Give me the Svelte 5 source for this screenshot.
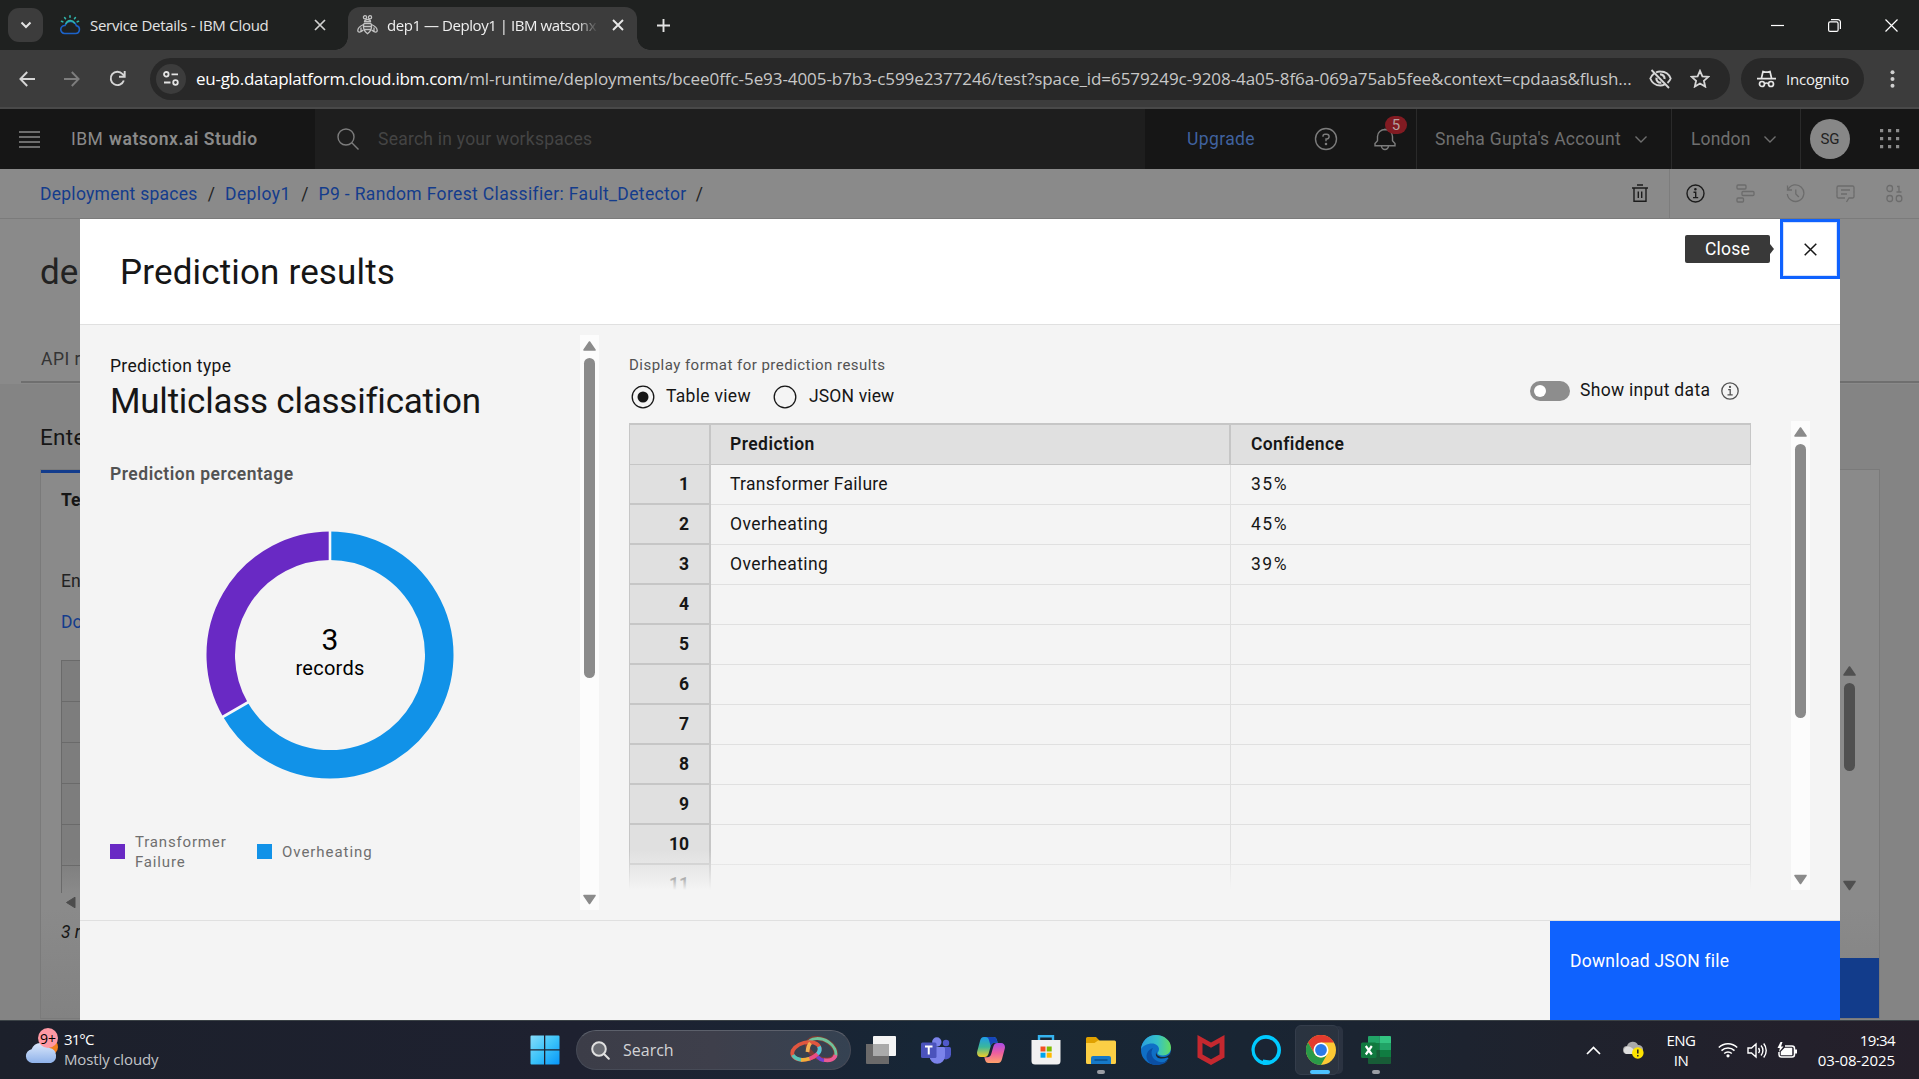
<script>
  const results = [
    ['Transformer Failure', '35%'],
    ['Overheating', '45%'],
    ['Overheating', '39%'],
  ];
  const rows = Array.from({ length: 11 }, (_, i) => ({
    n: i + 1,
    prediction: results[i]?.[0] ?? '',
    confidence: results[i]?.[1] ?? '',
  }));

  // Donut geometry: one ring, split clockwise from the top
  const C = 124;
  const R = 109.25;
  const point = (deg, r) => {
    const a = ((deg - 90) * Math.PI) / 180;
    return [C + r * Math.cos(a), C + r * Math.sin(a)];
  };
  function arc(from, to) {
    const [x1, y1] = point(from, R);
    const [x2, y2] = point(to, R);
    return `M${x1} ${y1}A${R} ${R} 0 ${to - from > 180 ? 1 : 0} 1 ${x2} ${y2}`;
  }
  const cut = (deg) => {
    const [x1, y1] = point(deg, 94);
    const [x2, y2] = point(deg, 125);
    return `M${x1} ${y1}L${x2} ${y2}`;
  };
</script>

{#snippet scrollbar(h, top, len, track, color)}
  <svg class="scrollbar" width="19" height={h} viewBox="0 0 19 {h}">
    <rect width="19" height={h} fill={track} />
    <path d="M9.5 7 L15 15 H4 Z" fill={color} stroke={color} stroke-width="1.6" stroke-linejoin="round" />
    <rect x="4" y={top} width="11" height={len} rx="5.5" fill={color} />
    <path d="M9.5 {h - 6.5} L15 {h - 14.5} H4 Z" fill={color} stroke={color} stroke-width="1.6" stroke-linejoin="round" />
  </svg>
{/snippet}

<div class="screen">
  <div class="tabs">
    <div class="tab-menu">
      <svg width="12" height="8" viewBox="0 0 12 8" fill="none" stroke="#e3e3e3" stroke-width="2"><path d="M1.5 1.5 6 6l4.500-4.500" /></svg>
    </div>
    <div class="tab idle">
      <svg width="22" height="20" viewBox="0 0 22 20" fill="none" stroke-width="1.6" stroke-linecap="round">
        <path d="M5.500 18.500h11a4 4 0 0 0 .8-7.900A6 6 0 0 0 6 10.500a4 4 0 0 0-.5 8Z" stroke="#1c63c9" />
        <path d="M7 8.500a4.800 4.800 0 0 1 8.500-.5" stroke="#2fb3a9" />
        <path d="M11 .9v1.300M5.600 2.600l.9 1.100M16.400 2.600l-.9 1.100M2.500 6.300l1.300.5M19.500 6.300l-1.300.5" stroke="#2fb3a9" />
      </svg>
      <span class="tab-label first">Service Details - IBM Cloud</span>
      <svg class="tab-x" width="12" height="12" viewBox="0 0 12 12" stroke="#d0d0d0" stroke-width="1.7"><path d="M1 1l10 10M11 1 1 11" /></svg>
    </div>
    <div class="tab active">
      <svg width="21" height="20" viewBox="0 0 21 20" fill="none" stroke="#c4c4c4" stroke-width="1.300">
        <circle cx="8" cy="2.300" r="1.600" /><circle cx="13" cy="2.300" r="1.600" />
        <path d="M7.500 6.500a3 2.200 0 0 1 6 0ZM7 8.500h7M6.700 11.500h7.600M7 14.500h7M6.800 8.500c-.7 3-.3 7.500 3.700 10.300C14.500 16 14.900 11.500 14.200 8.500" />
        <path d="M6.500 9.500C3 11 .8 13.300.8 15.500c0 2.300 3 2 5.500-.5M14.500 9.500c3.500 1.500 5.700 3.800 5.700 6 0 2.300-3 2-5.500-.5M4 12.500v4M17 12.500v4" />
      </svg>
      <span class="tab-label second">dep1 — Deploy1 | IBM watsonx</span>
      <svg class="tab-x" width="12" height="12" viewBox="0 0 12 12" stroke="#e8e8e8" stroke-width="1.9"><path d="M1 1l10 10M11 1 1 11" /></svg>
    </div>
    <svg class="plus" width="13" height="13" viewBox="0 0 13 13" stroke="#e3e3e3" stroke-width="1.900"><path d="M6.500 0v13M0 6.500h13" /></svg>
    <div class="window-controls">
      <svg width="13" height="13" viewBox="0 0 13 13" stroke="#fff" stroke-width="1.200"><path d="M0 6.500h13" /></svg>
      <svg width="13" height="13" viewBox="0 0 13 13" fill="none" stroke="#fff" stroke-width="1.200"><rect x=".6" y="2.900" width="9.500" height="9.500" rx="1.500" /><path d="M3 .7h7a2.400 2.400 0 0 1 2.400 2.400V10" /></svg>
      <svg width="13" height="13" viewBox="0 0 13 13" stroke="#fff" stroke-width="1.200"><path d="M.5.5l12 12M12.500.5l-12 12" /></svg>
    </div>
  </div>

  <div class="toolbar">
    <svg width="16" height="16" viewBox="0 0 16 16" fill="none" stroke="#d6d6d6" stroke-width="1.900"><path d="M16 8H1.800M8.200 1 1.400 8l6.800 7" /></svg>
    <svg width="16" height="16" viewBox="0 0 16 16" fill="none" stroke="#7d7d7d" stroke-width="1.900"><path d="M0 8h14.200M7.800 1l6.800 7-6.800 7" /></svg>
    <svg width="17" height="17" viewBox="0 0 17 17" fill="none" stroke="#d6d6d6" stroke-width="1.900"><path d="M14.800 10.500A6.700 6.700 0 1 1 13.500 4L15.500 6" /><path d="M15.700 1v5.700H10" /></svg>
    <div class="address">
      <div class="site">
        <svg width="16" height="15" viewBox="0 0 16 15" fill="none" stroke="#e3e3e3" stroke-width="1.800"><circle cx="3.300" cy="3.300" r="2.300" /><path d="M8.500 3.300H15M1 11.500h6.500" /><circle cx="12.500" cy="11.500" r="2.300" /></svg>
      </div>
      <span class="host">eu-gb.dataplatform.cloud.ibm.com</span><span class="path">/ml-runtime/deployments/bcee0ffc-5e93-4005-b7b3-c599e2377246/test?space_id=6579249c-9208-4a05-8f6a-069a75ab5fee&amp;context=cpdaas&amp;flush...</span>
      <svg class="eye" width="23" height="20" viewBox="0 0 23 20" fill="none" stroke="#d6d6d6" stroke-width="1.900"><path d="M7 3.300A11 11 0 0 1 11.500 2.500c4.700 0 8.600 2.800 10.200 7a10.500 10.500 0 0 1-3.200 4.500M4.800 4.800A11 11 0 0 0 1.300 9.500c1.600 4.200 5.500 7 10.200 7a11 11 0 0 0 4-.8M2.500 1l17.500 18" /><path d="M11 5.500a4 4 0 0 1 4.500 4.500M7.500 8.800a4 4 0 0 0 4.800 4.800" stroke-width="2.200" /></svg>
      <svg class="star" width="20" height="19" viewBox="0 0 20 19" fill="none" stroke="#d6d6d6" stroke-width="1.800"><path d="M10 1.800l2.400 5.500 6 .5-4.500 4 1.300 5.800L10 14.500l-5.200 3.100 1.300-5.800-4.500-4 6-.5Z" /></svg>
    </div>
    <div class="incognito">
      <svg width="19" height="18" viewBox="0 0 19 18" fill="none" stroke="#e6e6e6" stroke-width="1.700"><path d="M0 8.700h19M4.500 8 6 1.500l2 .6h3l2-.6L14.500 8" /><circle cx="5" cy="14" r="2.500" /><circle cx="14" cy="14" r="2.500" /><path d="M7.500 13.500q2-1 4 0" /></svg>
      <span>Incognito</span>
    </div>
    <svg class="kebab" width="5" height="18" viewBox="0 0 5 18" fill="#d0d0d0"><circle cx="2.500" cy="2.300" r="2" /><circle cx="2.500" cy="9" r="2" /><circle cx="2.500" cy="15.700" r="2" /></svg>
  </div>

  <header class="app-bar">
    <div class="brand">
      <svg width="21" height="17" viewBox="0 0 21 17" stroke="#8a8a8a" stroke-width="1.300"><path d="M0 1h21M0 6h21M0 11h21M0 16h21" /></svg>
      <span class="ibm">IBM</span><b>watsonx.ai Studio</b>
    </div>
    <div class="search">
      <svg width="22" height="22" viewBox="0 0 22 22" fill="none" stroke="#7c7c7c" stroke-width="1.400"><circle cx="9" cy="9" r="8" /><path d="M14.800 14.800 21.500 21.500" /></svg>
      <span>Search in your workspaces</span>
    </div>
    <div class="actions">
      <span class="upgrade">Upgrade</span>
      <svg class="help" width="24" height="24" viewBox="0 0 24 24" fill="none" stroke="#7c7c7c" stroke-width="1.400"><circle cx="12" cy="12" r="10.500" /><path d="M9 9.800V9.200A2 2 0 0 1 11 7.200h1.700a2.400 2.400 0 0 1 0 4.800H12v2.300" /><circle cx="12" cy="17" r=".6" fill="#7c7c7c" /></svg>
      <div class="bell">
        <svg width="22" height="24" viewBox="0 0 22 24" fill="none" stroke="#7c7c7c" stroke-width="1.400"><path d="M11 3.500v-2M1 18.700v-2.200l2.500-2.800V9.500a7.500 7 0 0 1 15 0v4.200L21 16.500v2.200ZM7.500 19a3.500 3.500 0 0 0 7 0" /></svg>
        <span class="badge">5</span>
      </div>
    </div>
    <div class="menu account"><span>Sneha Gupta's Account</span><svg width="12" height="7" viewBox="0 0 12 7" fill="none" stroke="#6f6f6f" stroke-width="1.400"><path d="M.5.5 6 6 11.500.5" /></svg></div>
    <div class="menu region"><span>London</span><svg width="12" height="7" viewBox="0 0 12 7" fill="none" stroke="#6f6f6f" stroke-width="1.400"><path d="M.5.5 6 6 11.500.5" /></svg></div>
    <div class="user">
      <div class="avatar">SG</div>
      <svg width="20" height="20" viewBox="0 0 20 20" fill="#8a8a8a"><path d="M0 0h3.200v3.200H0ZM8 0h3.200v3.200H8ZM16 0h3.200v3.200H16ZM0 8h3.200v3.200H0ZM8 8h3.200v3.200H8ZM16 8h3.200v3.200H16ZM0 16h3.200v3.200H0ZM8 16h3.200v3.200H8ZM16 16h3.200v3.200H16Z" /></svg>
    </div>
  </header>

  <nav class="crumbs">
    <a class="c1">Deployment spaces</a><i>/</i><a class="c2">Deploy1</a><i>/</i><a class="c3">P9 - Random Forest Classifier: Fault_Detector</a><i>/</i>
    <svg class="trash" width="16" height="19" viewBox="0 0 16 19" fill="none" stroke="#1c1c1c" stroke-width="1.400"><path d="M5 1h6M0 4h16M2 4v13.200h12V4M6.300 7.500v6.500M9.700 7.500v6.500" /></svg>
    <div class="side-tools">
      <svg width="19" height="19" viewBox="0 0 19 19" fill="none" stroke="#1c1c1c" stroke-width="1.400"><circle cx="9.500" cy="9.500" r="8.500" /><path d="M7.500 8.200h2.200v5.300M7 13.600h5.200" /><circle cx="9.400" cy="5.300" r=".6" fill="#1c1c1c" /></svg>
      <svg width="19" height="19" viewBox="0 0 19 19" fill="none" stroke="#6c6c6c" stroke-width="1.300"><rect x="1" y="1" width="9" height="4" rx="1" /><rect x="6" y="7.500" width="12" height="4" rx="1" /><rect x="1" y="14" width="6.500" height="4" rx="1" /></svg>
      <svg width="19" height="19" viewBox="0 0 19 19" fill="none" stroke="#6c6c6c" stroke-width="1.300"><path d="M1.500 1.500v4.500h4.500M2 5.700A8.300 8.300 0 1 1 1.300 10M9.800 5.500v4.500l3 3" /></svg>
      <svg width="19" height="19" viewBox="0 0 19 19" fill="none" stroke="#6c6c6c" stroke-width="1.300"><path d="M9 14H2.500A1.500 1.500 0 0 1 1 12.500v-9A1.500 1.500 0 0 1 2.500 2h14A1.500 1.500 0 0 1 18 3.500v9a1.500 1.500 0 0 1-1.500 1.500H13l-2.500 4M5 6h9M5 10h6" /></svg>
      <svg width="17" height="19" viewBox="0 0 17 19" fill="none" stroke="#6c6c6c" stroke-width="1.300"><rect x="1" y="1.500" width="5.500" height="6" rx="2.500" /><path d="M11 2.500h2V8M10.500 8h5" /><rect x="1" y="11.500" width="5.500" height="6" rx="2.500" /><rect x="10.300" y="11.500" width="5.500" height="6" rx="2.500" /></svg>
    </div>
  </nav>

  <main class="page">
    <section class="page-head">
      <h1>dep1</h1>
      <div class="page-tabs">API reference</div>
    </section>
    <section class="page-body">
      <h2>Enter input data</h2>
      <div class="card">
        <div class="card-line"></div>
        <b>Text</b>
        <p class="enter">Enter data manually</p>
        <p class="download">Download CSV template</p>
        <div class="card-row">
          <div class="grid-ghost"><div></div><div></div><div></div><div></div><div></div><div></div></div>
          {@render scrollbar(236, 23, 88, 'none', '#505050')}
        </div>
        <div class="card-foot">
          <svg width="12" height="13" viewBox="0 0 12 13"><path d="M1.500 6.500 10 1.200v10.600Z" fill="#4c4c4c" stroke="#4c4c4c" stroke-linejoin="round" /></svg>
          <em>3 rows</em>
        </div>
        <div class="predict"></div>
      </div>
    </section>

    <div class="modal" role="dialog" aria-label="Prediction results">
      <div class="modal-head">
        <h2>Prediction results</h2>
        <div class="tooltip">Close</div>
        <button class="close" aria-label="Close">
          <svg width="13" height="13" viewBox="0 0 13 13" stroke="#161616" stroke-width="1.500"><path d="M.7.7l11.600 11.600M12.300.7.7 12.300" /></svg>
        </button>
      </div>

      <div class="modal-body">
        <aside>
          <p class="type">Prediction type</p>
          <h3>Multiclass classification</h3>
          <p class="percent">Prediction percentage</p>
          <svg class="donut" width="248" height="248" viewBox="0 0 248 248" fill="none">
            <path d={arc(0, 240)} stroke="#1192e8" stroke-width="28.500" />
            <path d={arc(240, 360)} stroke="#6929c4" stroke-width="28.500" />
            <path d={cut(0) + cut(240)} stroke="#f7f7fa" stroke-width="2.600" />
            <text class="count" x="124" y="119">3</text>
            <text class="unit" x="124" y="144">records</text>
          </svg>
          <div class="legend">
            <div class="key"><span class="swatch purple"></span><span class="k1">Transformer<br />Failure</span></div>
            <div class="key"><span class="swatch blue"></span><span class="k2">Overheating</span></div>
          </div>
        </aside>
        <div class="left-scroll">{@render scrollbar(575, 23, 320, '#fcfcfc', '#8b8b8b')}</div>

        <div class="results">
          <div class="results-head">
            <div class="format">
              <p>Display format for prediction results</p>
              <div class="radios">
                <svg width="24" height="24" viewBox="0 0 24 24" fill="none"><circle cx="12" cy="12" r="10.800" stroke="#161616" stroke-width="1.300" /><circle cx="12" cy="12" r="5.500" fill="#161616" /></svg>
                <span class="r1">Table view</span>
                <svg width="24" height="24" viewBox="0 0 24 24" fill="none"><circle cx="12" cy="12" r="10.800" stroke="#161616" stroke-width="1.300" /></svg>
                <span class="r2">JSON view</span>
              </div>
            </div>
            <div class="toggle">
              <span class="switch"></span>
              <span class="toggle-label">Show input data</span>
              <svg width="18" height="18" viewBox="0 0 18 18" fill="none" stroke="#525252" stroke-width="1.300"><circle cx="9" cy="9" r="8.200" /><path d="M7.200 7.700h2v5M6.500 12.800h5.200" /><circle cx="9" cy="4.900" r=".5" fill="#525252" /></svg>
            </div>
          </div>
          <div class="table-area">
            <div class="table">
              <div class="row head"><span class="idx"></span><span class="pred">Prediction</span><span class="conf">Confidence</span></div>
              {#each rows as r}
                <div class="row"><span class="idx">{r.n}</span><span class="pred" class:long={r.n === 1}>{r.prediction}</span><span class="conf">{r.confidence}</span></div>
              {/each}
            </div>
            {@render scrollbar(469, 23, 274, '#fcfcfc', '#8b8b8b')}
          </div>
        </div>
      </div>

      <div class="modal-foot"><button class="primary">Download JSON file</button></div>
    </div>
  </main>

  <footer class="taskbar">
    <div class="weather">
      <svg width="40" height="40" viewBox="0 0 40 40">
        <defs><linearGradient id="cl" x1="0" y1="0" x2="0" y2="1"><stop offset="0" stop-color="#dbe8fb" /><stop offset="1" stop-color="#8fb2ea" /></linearGradient></defs>
        <circle cx="27" cy="20" r="8" fill="#f2801e" />
        <path d="M9 36a7 7 0 0 1-.5-13.800A10 10 0 0 1 26.500 21 7.800 7.800 0 0 1 28 36Z" fill="url(#cl)" />
        <circle cx="25" cy="11" r="10" fill="#ff99a4" />
        <text x="25" y="16.500" class="nine">9+</text>
      </svg>
      <div class="lines"><span class="temp">31°C</span><span class="sky">Mostly cloudy</span></div>
    </div>

    <div class="slot start">
      <svg width="30" height="30" viewBox="0 0 30 30">
        <defs><linearGradient id="w" x1="0" y1="0" x2="1" y2="1"><stop offset="0" stop-color="#86dcfb" /><stop offset=".5" stop-color="#3cc3f9" /><stop offset="1" stop-color="#0796fa" /></linearGradient></defs>
        <path d="M1.500.5H14v13.700H.5V1.500a1 1 0 0 1 1-1ZM15.300.5h13.200a1 1 0 0 1 1 1v12.700H15.300ZM.5 15.500H14v14H1.500a1 1 0 0 1-1-1ZM15.300 15.500h14.200v13a1 1 0 0 1-1 1H15.300Z" fill="url(#w)" />
      </svg>
    </div>
    <div class="task-search">
      <svg width="19" height="19" viewBox="0 0 19 19" fill="none" stroke="#e0e0e0" stroke-width="2"><circle cx="8" cy="8" r="6.800" fill="#6a6c73" /><path d="m12.800 12.800 5 5" stroke-linecap="round" /></svg>
      <span>Search</span>
      <svg width="48" height="28" viewBox="0 0 48 28" fill="none" stroke-width="3.800">
        <ellipse cx="31.500" cy="13" rx="15" ry="9.500" transform="rotate(26 31.500 13)" stroke="#7d3b34" stroke-width="4.500" />
        <path d="M17.500 7.500C20 1.500 31 1 38.500 6c5.500 3.800 8.500 9.500 7 15" stroke="#6fc29b" stroke-width="3" />
        <path d="M45.500 19c-1 4-5 6.500-12 5" stroke="#ea5a92" /><path d="M34 24.500c-3-.5-5-2-7-4" stroke="#7440cf" />
        <ellipse cx="16" cy="15" rx="14" ry="8.500" transform="rotate(-14 16 15)" stroke="#e0563f" />
        <path d="M3 19q2 4 9 4.800" stroke="#55c4b6" /><path d="M11 23.800q4 .3 9-1.300" stroke="#f0b03c" /><path d="M19.500 22.700q5-1.800 8-5" stroke="#ea4c86" /><path d="M27.500 18q3.500-3.500 1.500-7.500" stroke="#53c4d8" /><path d="M17.500 16q.5-6.500 3-9" stroke="#f3b053" />
      </svg>
    </div>
    <div class="apps">
      <div class="slot">
        <svg width="30" height="28" viewBox="0 0 30 28"><path d="M0 8h23v20H1a1 1 0 0 1-1-1Z" fill="#6b6a6a" /><rect x="7" y="0" width="23" height="20" rx="1" fill="#f4f4f4" /><path d="M7 8h16v12H7Z" fill="#aaa" /></svg>
      </div>
      <div class="slot">
        <svg width="30" height="27" viewBox="0 0 30 27">
          <circle cx="25" cy="6" r="3.200" fill="#5059c9" /><path d="M20 10h8.500A1.500 1.500 0 0 1 30 11.500v6a5 5 0 0 1-7 4.500Z" fill="#5059c9" />
          <circle cx="15.800" cy="5" r="4.700" fill="#7b83eb" /><path d="M8 10h14.500a1.500 1.500 0 0 1 1.500 1.500V19a7.600 7.600 0 0 1-15.500 0Z" fill="#7b83eb" />
          <rect x="0" y="5.500" width="15.500" height="15.500" rx="1.500" fill="#4b53bc" /><path d="M4 9.500h7.500M7.750 9.500v8" stroke="#fff" stroke-width="2" />
        </svg>
      </div>
      <div class="slot">
        <svg width="28" height="26" viewBox="0 0 28 26">
          <defs>
            <linearGradient id="c1" x1="0" y1="0" x2="0" y2="1"><stop offset="0" stop-color="#1f9be8" /><stop offset=".5" stop-color="#3bb79a" /><stop offset="1" stop-color="#f3cd28" /></linearGradient>
            <linearGradient id="c2" x1="0" y1="0" x2="0" y2="1"><stop offset="0" stop-color="#a84be8" /><stop offset=".5" stop-color="#ee5f9f" /><stop offset="1" stop-color="#ffa26a" /></linearGradient>
          </defs>
          <path d="M7 0h9.500c2 0 2.800 1.200 3.400 3l.8 2.800h-3c-2.500 0-3.300 1.300-4 3.500l-2 7c-.6 2.200-1.800 3.700-4.200 3.700H4c-3 0-4.500-2.500-3.800-5.500L3 4C3.700 1.500 4.700 0 7 0Z" fill="url(#c1)" />
          <path d="M16.500 0c2 0 2.800 1.200 3.400 3l.8 2.800h-3c-2.500 0-3.300 1.300-4 3.500L12 3c-.6-2-1.500-3-3.500-3Z" fill="#1746ba" />
          <path d="M21 26h-9.500c-2 0-2.800-1.200-3.400-3l-.8-2.800h3c2.500 0 3.300-1.300 4-3.500l2-7c.6-2.200 1.800-3.700 4.200-3.700H24c3 0 4.500 2.500 3.800 5.500L25 22c-.7 2.500-1.700 4-4 4Z" fill="url(#c2)" />
        </svg>
      </div>
      <div class="slot">
        <svg width="30" height="30" viewBox="0 0 30 30"><path d="M8 6V1.300h14V6" fill="none" stroke="#35b3ef" stroke-width="2.400" /><path d="M.5 5h29v21a3.500 3.500 0 0 1-3.500 3.500H4A3.500 3.500 0 0 1 .5 26Z" fill="#f1f1f1" /><path d="M9.500 11.500h5v5h-5Z" fill="#f25022" /><path d="M15.700 11.500h5v5h-5Z" fill="#7fba00" /><path d="M9.500 17.700h5v5h-5Z" fill="#00a4ef" /><path d="M15.700 17.700h5v5h-5Z" fill="#ffb900" /></svg>
      </div>
      <div class="slot running">
        <svg width="30" height="27" viewBox="0 0 30 27"><path d="M0 1.500A1.500 1.500 0 0 1 1.500 0H10l3.500 3.500V9H0Z" fill="#e0a100" /><path d="M0 6h8.500L12 3.500h16.500A1.500 1.500 0 0 1 30 5v20.500a1.500 1.500 0 0 1-1.500 1.500h-27A1.500 1.500 0 0 1 0 25.500Z" fill="#fccf45" /><path d="M5 27v-6a2 2 0 0 1 2-2h16a2 2 0 0 1 2 2v6Z" fill="#1679c8" /><path d="M8.500 23h13" stroke="#0a4f8c" stroke-width="1.500" /></svg>
      </div>
      <div class="slot">
        <svg width="30" height="30" viewBox="0 0 30 30">
          <defs><linearGradient id="e1"><stop offset="0" stop-color="#2a9fe0" /><stop offset=".55" stop-color="#35c1c8" /><stop offset="1" stop-color="#62dd62" /></linearGradient></defs>
          <circle cx="15" cy="15" r="15" fill="#0f6fc6" />
          <path d="M0 14.500C.5 6 7 0 15 0s15 5.500 15 12.500c0 5-3.800 8-8 8-3.500 0-5.500-1.200-5.500-2.500 0-.8 1.500-1.500 1.500-4 0-3-3-5.500-7-5.500-5 0-9.500 2.500-11 6Z" fill="url(#e1)" />
          <path d="M12 13c-3 4-1.500 11 5 13.500 4 1.500 8 .5 10.500-1.500C25 28 20.500 30 15 30 8 30 4 24 6 18.500c1-2.800 3.500-4.800 6-5.500Z" fill="#0b4fa3" />
          <path d="M30 16c-1 4-4 6-8 6-4.500 0-7.500-2-6.500-5.500C13 22 18 25.500 26.500 22.500l2 1A15 15 0 0 0 30 16Z" fill="#192635" />
        </svg>
      </div>
      <div class="slot">
        <svg width="28" height="30" viewBox="0 0 28 30"><path d="M.5 0 14 7.500 27.500 0v22.500L14 30 .5 22.500Z" fill="#c5282f" /><path d="M5.500 8 14 12.800 22.500 8v11.500L14 24.200 5.500 19.500Z" fill="#192534" /></svg>
      </div>
      <div class="slot">
        <svg width="30" height="30" viewBox="0 0 30 30"><path d="M15 0a15 15 0 0 1 0 30 15 15 0 0 1-3-.3V26c0-1.500-1.300-2-2.500-2.800A11.200 11.200 0 1 1 26 14.500C26 22 17.500 28 12.500 29.700A15 15 0 0 1 15 0Z" fill="#00caff" /><circle cx="15" cy="15" r="11.300" fill="#1a2433" /><path d="M12 24.500v5.200q4-1 7-4.300Z" fill="#00caff" /></svg>
      </div>
      <div class="slot current">
        <svg width="30" height="30" viewBox="0 0 30 30">
          <circle cx="15" cy="15" r="15" fill="#fcc934" />
          <path d="M15 7.500h13A15 15 0 0 0 2 7.500l6.500 11.300Z" fill="#e33b2e" />
          <path d="M2 7.500A15 15 0 0 0 15 30l6.500-11.300A7.500 7.500 0 0 1 8.500 18.700Z" fill="#2a9a48" />
          <circle cx="15" cy="15" r="7.500" fill="#fff" /><circle cx="15" cy="15" r="5.900" fill="#2b7ae8" />
        </svg>
      </div>
      <div class="slot running">
        <svg width="30" height="28" viewBox="0 0 30 28"><path d="M8 0h10.500v7H7V1a1 1 0 0 1 1-1Z" fill="#21a366" /><path d="M18.500 0H29a1 1 0 0 1 1 1v6H18.500Z" fill="#33c481" /><path d="M7 7h11.500v7H7Z" fill="#107c41" /><path d="M18.500 7H30v7H18.500Z" fill="#21a366" /><path d="M7 14h11.500v7H7Z" fill="#185c37" /><path d="M18.500 14H30v7H18.500Z" fill="#107c41" /><path d="M7 21h23v6a1 1 0 0 1-1 1H8a1 1 0 0 1-1-1Z" fill="#185c37" /><rect x="0" y="6.500" width="15.500" height="15.500" rx="1.500" fill="#10793f" /><path d="m4.800 10 6 8.500M10.800 10l-6 8.500" stroke="#fff" stroke-width="2.200" /></svg>
      </div>
    </div>

    <div class="tray">
      <svg class="up" width="15" height="9" viewBox="0 0 15 9" fill="none" stroke="#fff" stroke-width="1.700"><path d="m1 8 6.500-6.500L14 8" /></svg>
      <svg class="drive" width="21" height="18" viewBox="0 0 21 18"><path d="M4 13a4 4 0 0 1 0-8A6 6 0 0 1 15 4a4.500 4.500 0 0 1 1 9Z" fill="#a9a9a9" /><path d="M3 13a4 4 0 0 1 1-7.500c3-.5 5 1 7 3.500v4Z" fill="#dedede" /><circle cx="14.800" cy="12" r="5.800" fill="#fde300" /><path d="M14.800 8.500v4M14.800 14v1.500" stroke="#222" stroke-width="1.500" /></svg>
      <div class="lang"><span>ENG</span><span>IN</span></div>
      <svg class="wifi" width="20" height="16" viewBox="0 0 20 16" fill="none" stroke="#fff" stroke-width="1.500"><path d="M.8 5.500a13 13 0 0 1 18.400 0M3.500 8.600a9.300 9.300 0 0 1 13 0M6.200 11.500a5.500 5.500 0 0 1 7.600 0" /><circle cx="10" cy="13.800" r="1.600" fill="#fff" stroke="none" /></svg>
      <svg class="vol" width="21" height="17" viewBox="0 0 21 17" fill="none" stroke="#fff" stroke-width="1.400"><path d="M1 6v5h3.500L9 15V2L4.500 6ZM11.500 6a4 4 0 0 1 0 5M14 3.500a7.500 7.500 0 0 1 0 10M16.700 1.500a11 11 0 0 1 0 14" /></svg>
      <svg class="bat" width="21" height="17" viewBox="0 0 21 17" fill="none" stroke="#fff" stroke-width="1.500"><path d="M8 4h7a2.500 2.500 0 0 1 2.500 2.500v6A2.500 2.500 0 0 1 15 15H4.500A2.500 2.500 0 0 1 2 12.500V10" /><path d="M8 6.500h6.500v6h-10V10Z" fill="#fff" /><path d="M19 7.500v4" stroke-width="2" /><path d="M3.500 0 .5 6h2.300L2 10l4.500-5.500H4L5.500 0Z" fill="#fff" stroke="none" /></svg>
      <div class="clock"><span class="time">19:34</span><span>03-08-2025</span></div>
    </div>
  </footer>
</div>

<style>
  :global(body) { margin: 0; background: #848484; }
  * { box-sizing: border-box; }
  h1, h2, h3, p { margin: 0; font-weight: 400; }
  button { border: 0; padding: 0; font: inherit; }
  svg { display: block; flex: none; }
  span, a, b, em { white-space: nowrap; }

  .screen { width: 1919px; height: 1079px; overflow: hidden; display: flex; flex-direction: column; font: 17.5px/24px Roboto, sans-serif; color: #161616; }

  /* Browser chrome */
  .tabs { height: 50px; flex: none; background: #1f2120; display: flex; align-items: center; padding-left: 8px; font: 15px/24px "Open Sans", sans-serif; color: #e3e3e3; }
  .tab-menu { width: 35px; height: 34px; border-radius: 11px; background: #3c3c3c; display: flex; align-items: center; justify-content: center; }
  .tab { height: 43px; display: flex; align-items: center; align-self: flex-end; padding-bottom: 7px; }
  .tab.idle { width: 305px; padding-left: 16px; }
  .tab.active { width: 289px; padding-left: 9px; background: #3c3c3c; border-radius: 12px 12px 0 0; position: relative; }
  .tab.active::before, .tab.active::after { content: ""; position: absolute; bottom: 0; width: 13px; height: 13px; }
  .tab.active::before { left: -13px; background: radial-gradient(circle at 0 0, transparent 12.500px, #3c3c3c 13px); }
  .tab.active::after { right: -13px; background: radial-gradient(circle at 100% 0, transparent 12.500px, #3c3c3c 13px); }
  .tab-label { margin-left: 9px; }
  .first { width: 216px; letter-spacing: -0.270px; }
  .second { width: 210px; letter-spacing: -0.440px; color: #f0f0f0; -webkit-mask-image: linear-gradient(90deg, #000 190px, transparent 211px); mask-image: linear-gradient(90deg, #000 190px, transparent 211px); }
  .idle .tab-x { margin-left: 8px; }
  .active .tab-x { margin-left: 15px; }
  .plus { margin-left: 20px; }
  .window-controls { margin-left: auto; margin-right: 21px; display: flex; gap: 44px; }

  .toolbar { height: 59px; flex: none; background: linear-gradient(#3c3c3c 57px, #494949 57px); display: flex; align-items: center; padding: 0 0 2px 19px; font-family: "Open Sans", sans-serif; }
  .toolbar > svg + svg { margin-left: 29px; }
  .address { width: 1580px; height: 42px; margin-left: 24px; padding-left: 6px; border-radius: 21px; background: #282828; display: flex; align-items: center; font-size: 17px; }
  .site { width: 30px; height: 30px; margin-right: 10px; border-radius: 50%; background: #3c3c3c; display: flex; align-items: center; justify-content: center; }
  .host { color: #fff; letter-spacing: -0.270px; width: 267px; }
  .path { color: #c7c7c7; letter-spacing: -0.070px; width: 1170px; }
  .eye { margin-left: 16px; }
  .star { margin-left: 18px; }
  .incognito { width: 123px; height: 42px; margin-left: 11px; padding-left: 16px; border-radius: 21px; background: #282828; display: flex; align-items: center; gap: 10px; color: #f0f0f0; font-size: 15px; letter-spacing: -0.230px; }
  .kebab { margin-left: 26px; }

  /* Product header, dimmed by the open dialog */
  .app-bar { height: 60px; flex: none; display: flex; background: #161616; color: #6f6f6f; }
  .app-bar > div { display: flex; align-items: center; }
  .brand { width: 315px; padding-left: 19px; color: #8a8a8a; }
  .ibm { margin-left: 31px; width: 38px; letter-spacing: 0.400px; }
  .brand b { font-weight: 600; letter-spacing: 0.530px; }
  .search { width: 830px; padding-left: 22px; background: #1e1e1e; color: #444; }
  .search span { margin-left: 19px; letter-spacing: 0.240px; }
  .actions { width: 272px; padding-left: 42px; border-right: 1px solid #2a2a2a; }
  .upgrade { color: #40629f; width: 127px; letter-spacing: 0.390px; }
  .bell { position: relative; margin-left: 36px; }
  .badge { position: absolute; left: 11px; top: -11px; width: 22px; height: 18px; border-radius: 9px; background: #821b22; color: #b5a0a0; font-size: 15px; line-height: 18px; text-align: center; }
  .menu { border-right: 1px solid #2a2a2a; justify-content: space-between; }
  .account { width: 255px; padding: 0 24px 0 18px; letter-spacing: 0.320px; }
  .region { width: 129px; padding: 0 24px 0 19px; letter-spacing: 0.150px; }
  .user { padding-left: 9px; }
  .avatar { width: 40px; height: 40px; border-radius: 50%; background: #878787; color: #222; text-align: center; line-height: 40px; font-size: 15px; margin-right: 30px; }

  .crumbs { height: 50px; flex: none; background: #8a8a8a; border-bottom: 1px solid #7b7b7b; display: flex; align-items: center; padding-left: 40px; color: #143c8c; }
  .crumbs i { font-style: normal; color: #222; width: 27.500px; text-align: center; }
  .c1 { width: 157.500px; letter-spacing: 0.260px; }
  .c2 { width: 66px; letter-spacing: 0.400px; }
  .c3 { width: 367px; letter-spacing: 0.360px; }
  .trash { margin-left: auto; margin-right: 21px; }
  .side-tools { height: 49px; border-left: 1px solid #7d7d7d; padding: 0 16px 0 16px; display: flex; align-items: center; gap: 31px; }

  /* Page behind the dialog */
  .page { height: 801px; flex: none; position: relative; }
  .page-head { height: 165px; background: #8a8a8a; padding: 35px 0 0 40px; }
  .page-head h1 { font-size: 35px; line-height: 38px; color: #222; }
  .page-tabs { margin: 55px 0 0 -19px; padding-left: 20px; height: 36px; border-bottom: 2px solid #6f6f6f; color: #343434; letter-spacing: 0.500px; }
  .page-body { height: 636px; background: #848484; padding: 39px 39px 0 40px; }
  .page-body h2 { font-size: 22.500px; line-height: 28px; letter-spacing: 0.300px; color: #161616; }
  .card { margin-top: 18px; height: 550px; border: 1px solid #7a7a7a; background: linear-gradient(#8a8a8a 80%, #828282); padding-left: 20px; display: flex; flex-direction: column; }
  .card-line { height: 3px; width: 200px; margin: 0 0 0 -20px; background: #123c8d; flex: none; }
  .card b { margin-top: 15px; font-weight: 700; }
  .enter { margin-top: 57px; color: #222; }
  .download { margin-top: 17px; color: #143c8c; }
  .card-row { display: flex; flex: none; justify-content: space-between; margin-top: 26px; padding-right: 20px; height: 233px; align-items: flex-start; }
  .grid-ghost { width: 900px; border-left: 1px solid #6a6a6a; border-top: 1px solid #6a6a6a; height: 233px; overflow: hidden; background: linear-gradient(#7d7d7d 85%, #8a8a8a); }
  .grid-ghost div { height: 41px; border-bottom: 1px solid #6a6a6a; }
  .card-foot { display: flex; flex: none; flex-direction: column; gap: 6px; margin: 3px 0 0 4px; }
  .card-foot em { margin-left: -4px; margin-top: 5px; }
  .predict { margin: auto 0 0 auto; width: 200px; height: 60px; flex: none; background: #123c8b; }

  /* Dialog */
  .modal { position: absolute; left: 80px; top: 0; width: 1760px; height: 801px; background: #f4f4f4; display: flex; flex-direction: column; }
  .modal-head { height: 106px; flex: none; background: #fff; border-bottom: 1px solid #e0e0e0; display: flex; align-items: flex-start; }
  .modal-head h2 { margin: 34px auto 0 40px; font-size: 35px; line-height: 40px; letter-spacing: 0.160px; }
  .tooltip { margin: 16px 10px 0 0; width: 85px; height: 28px; border-radius: 2px; background: #393939; color: #fff; text-align: center; line-height: 28px; letter-spacing: 0.200px; position: relative; }
  .tooltip::after { content: ""; position: absolute; left: 100%; top: 9px; border: 5px solid transparent; border-left: 4px solid #393939; border-right: 0; }
  .close { width: 60px; height: 60px; background: #fff; border: 3px solid #0f62fe; box-shadow: inset 0 0 0 1px #d6e2fb; display: flex; align-items: center; justify-content: center; }
  .modal-body { height: 595px; flex: none; display: flex; }
  aside { width: 500px; padding: 29px 0 0 30px; }
  .type { letter-spacing: 0.320px; }
  aside h3 { margin-top: 4px; font-size: 35px; line-height: 40px; letter-spacing: -0.240px; }
  .percent { margin-top: 40px; color: #525252; font-weight: 600; letter-spacing: 0.500px; }
  .donut { margin: 45px 0 0 96px; }
  .count { font-size: 30px; fill: #000; text-anchor: middle; }
  .unit { font-size: 20px; fill: #000; text-anchor: middle; letter-spacing: 0.250px; }
  .legend { margin-top: 53px; display: flex; font-size: 15px; line-height: 20px; color: #6f6f6f; }
  .key { display: flex; align-items: center; gap: 10px; width: 147px; height: 40px; }
  .swatch { width: 15px; height: 15px; margin-top: -1px; }
  .purple { background: #6929c4; }
  .blue { background: #1192e8; }
  .k1 { letter-spacing: 0.830px; }
  .k2 { letter-spacing: 0.960px; }
  .left-scroll { padding-top: 10px; }

  .results { margin-left: 30px; width: 1181px; }
  .results-head { height: 96px; display: flex; justify-content: space-between; padding-right: 71px; }
  .format p { margin-top: 30px; font-size: 15px; line-height: 20px; color: #525252; letter-spacing: 0.470px; }
  .radios { margin: 9px 0 0 2px; display: flex; }
  .radios svg { margin-top: 1px; }
  .r1 { margin-left: 11px; width: 107px; letter-spacing: 0.300px; }
  .r2 { margin-left: 12px; letter-spacing: 0.150px; }
  .toggle { display: flex; align-items: center; height: 24px; margin-top: 54px; }
  .switch { width: 40px; height: 20px; border-radius: 10px; background: #8d8d8d; padding: 4px; }
  .switch::before { content: ""; display: block; width: 12px; height: 12px; border-radius: 50%; background: #fff; }
  .toggle-label { margin: -3px 0 0 10px; width: 141px; letter-spacing: 0.310px; }
  .table-area { display: flex; justify-content: space-between; }
  .table { margin-top: 2px; width: 1122px; height: 467px; overflow: hidden; position: relative; }
  .table::after { content: ""; position: absolute; inset: auto 0 0 0; height: 40px; background: linear-gradient(rgba(244, 244, 244, 0), rgba(244, 244, 244, .45) 50%, #f4f4f4); }
  .row { display: grid; grid-template-columns: 82px 520px 520px; grid-template-rows: 40px; height: 40px; line-height: 39px; }
  .row span { padding-left: 19px; border-bottom: 1px solid #e0e0e0; border-right: 1px solid #e0e0e0; }
  .row .idx { background: #e0e0e0; border: solid #c6c6c6; border-width: 0 2px 2px 1px; padding: 0 20px 0 0; text-align: right; font-weight: 700; }
  .row .pred { letter-spacing: 0.440px; }
  .row .long { letter-spacing: 0.280px; }
  .row .conf { padding-left: 20px; letter-spacing: 1.500px; }
  .row.head { height: 42px; grid-template-rows: 42px; }
  .row.head span { background: #e0e0e0; border: solid #c6c6c6; border-width: 2px 2px 1px 0; font-weight: 600; }
  .row.head .idx { border-left-width: 1px; }
  .row.head .conf { letter-spacing: 0.370px; border-right-width: 1px; }

  .modal-foot { flex: 1; border-top: 1px solid #e0e0e0; display: flex; justify-content: flex-end; }
  .primary { width: 290px; background: #0f62fe; color: #fff; text-align: left; padding: 28px 20px 0; line-height: 24px; letter-spacing: 0.240px; display: flex; align-items: flex-start; }

  /* Taskbar */
  .taskbar { height: 59px; flex: none; border-top: 1px solid #3b4246; background: linear-gradient(90deg, #1c202b, #1e2130 30%, #172636 48%, #192533 65%, #1f222d 82%, #251f2a); display: flex; align-items: center; color: #fff; font: 15px/20px "Open Sans", sans-serif; }
  .weather { width: 517px; display: flex; align-items: center; padding-left: 23px; }
  .weather svg { margin-top: -6px; width: 40px; }
  .nine { font: 14px "Open Sans", sans-serif; text-anchor: middle; fill: #000; }
  .lines, .lang, .clock { display: flex; flex-direction: column; line-height: 20.500px; }
  .lines { margin: -2px 0 0 1px; }
  .temp { letter-spacing: -0.900px; }
  .sky { letter-spacing: -0.130px; color: #c2c4c8; }
  .slot { width: 55px; height: 50px; display: flex; align-items: center; justify-content: center; position: relative; }
  .task-search { margin: 0 2px 0 4px; width: 275px; height: 40px; border-radius: 20px; background: linear-gradient(90deg, #3c3d48, #3e3f4b 50%, #354252); border: 1px solid #474b57; border-top-color: #5c606b; display: flex; align-items: center; padding-left: 14px; font-size: 16px; color: #d2d3d6; }
  .task-search span { margin-left: 13px; width: 167px; }
  .apps { display: flex; }
  .running::after, .current::after { content: ""; position: absolute; left: 24px; bottom: 1px; width: 8px; height: 4px; border-radius: 2px; background: #9a9da4; }
  .current::before { content: ""; position: absolute; inset: 0 9px 0 2px; border: 1px solid #343d4b; border-radius: 6px; background: #ffffff12; box-shadow: 5px 0 0 -1px #2b3341; }
  .current svg { position: relative; }
  .current::after { left: 17px; width: 20px; background: #4cc2ff; }
  .tray { margin-left: auto; padding-right: 24px; display: flex; align-items: center; }
  .drive { margin-left: 22px; }
  .lang { margin-left: 22px; width: 30px; align-items: center; letter-spacing: -0.500px; }
  .wifi { margin-left: 22px; }
  .vol { margin-left: 9px; }
  .bat { margin-left: 9px; }
  .clock { width: 97px; align-items: flex-end; letter-spacing: -0.100px; }
  .time { letter-spacing: -0.600px; }
</style>
